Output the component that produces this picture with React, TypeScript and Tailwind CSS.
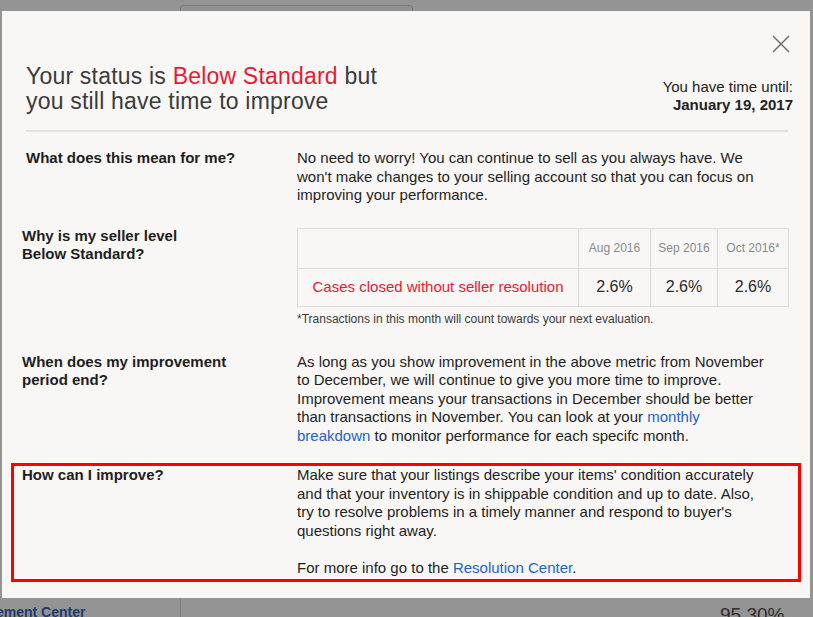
import React from "react";

const font = { fontFamily: '"Liberation Sans", Arial, sans-serif' };

function CloseIcon() {
  return (
    <svg width="18" height="18" viewBox="0 0 18 18" fill="none" stroke="#6f6f6f" strokeWidth="1.5">
      <path d="M1 1 L17 17 M17 1 L1 17" />
    </svg>
  );
}

function Row({
  label,
  children,
  highlight,
  className,
  labelClass,
}: {
  label: React.ReactNode;
  children: React.ReactNode;
  highlight?: boolean;
  className?: string;
  labelClass?: string;
}) {
  return (
    <div
      className={
        "grid grid-cols-[275px_474px] border-[3px] pl-[8px] " +
        (highlight ? "border-[#ff0000] pb-[2px] " : "border-transparent ") +
        (className ?? "")
      }
    >
      <div className={"text-[15px] font-bold leading-[18.5px] text-[#1e1e1e] " + (labelClass ?? "")}>{label}</div>
      <div className="text-[15px] leading-[18.5px] text-[#1e1e1e]">{children}</div>
    </div>
  );
}

function MetricsTable() {
  const months = ["Aug 2016", "Sep 2016", "Oct 2016*"];
  return (
    <div className="w-[491px]">
      <table className="w-[491px] table-fixed border-collapse border border-[#dcdbd9]">
        <colgroup>
          <col className="w-[281px]" />
          <col className="w-[72px]" />
          <col className="w-[67px]" />
          <col className="w-[71px]" />
        </colgroup>
        <tbody>
          <tr className="h-[40px]">
            <td className="border border-[#dcdbd9]" />
            {months.map((m) => (
              <td key={m} className="border border-[#dcdbd9] text-center text-[12px] text-[#8a8a8a]">
                {m}
              </td>
            ))}
          </tr>
          <tr className="h-[38px]">
            <td className="border border-[#dcdbd9] text-center text-[15px] text-[#e31b35]">
              Cases closed without seller resolution
            </td>
            {months.map((m) => (
              <td key={m} className="border border-[#dcdbd9] text-center text-[16px] text-[#2a2a2a]">
                2.6%
              </td>
            ))}
          </tr>
        </tbody>
      </table>
      <p className="mt-[4px] whitespace-nowrap text-[12px] leading-[16px] text-[#3a3a3a]">
        *Transactions in this month will count towards your next evaluation.
      </p>
    </div>
  );
}

export default function App() {
  return (
    <div className="relative h-[617px] w-[813px] overflow-hidden bg-[#949494]" style={font}>
      {/* page behind the overlay */}
      <div className="absolute left-[180px] top-[5px] h-[40px] w-[233px] rounded-t-[3px] border border-[#7c7c7c] bg-[#929292]" />
      <div className="absolute left-[180px] top-[590px] h-[40px] w-px bg-[#7e7e7e]" />
      <div className="absolute left-[-4px] top-[602px] text-[14px] font-bold text-[#1f3b6e]">ement Center</div>
      <div className="absolute left-[720px] top-[601px] text-[19px] text-[#2e2e2e]">95.30%</div>

      {/* dialog */}
      <div className="absolute left-[2px] top-[11px] h-[587px] w-[808px] bg-[#f8f7f5]">
        <button className="absolute right-[20px] top-[24px]" aria-label="Close">
          <CloseIcon />
        </button>

        <div className="flex items-end justify-between pl-[24px] pr-[17px] pt-[53px]">
          <h1 className="text-[23px] font-light leading-[25px] tracking-[0.2px] text-[#3b3b3b]">
            Your status is <span className="text-[#e31b35]">Below Standard</span> but
            <br />
            you still have time to improve
          </h1>
          <div className="text-right text-[15px] leading-[18px] text-[#222]">
            <div>You have time until:</div>
            <div className="font-bold">January 19, 2017</div>
          </div>
        </div>

        <div className="ml-[24px] mt-[16px] h-[2px] w-[762px] bg-[#e3e2e0]" />

        <div className="mx-[9px]">
          <Row label="What does this mean for me?" labelClass="pl-[4px]" className="mt-[14px]">
            No need to worry! You can continue to sell as you always have. We won't make changes to your
            selling account so that you can focus on improving your performance.
          </Row>

          <Row
            className="mt-[16px]"
            label={
              <>
                Why is my seller level
                <br />
                Below Standard?
              </>
            }
          >
            <div className="pt-px">
              <MetricsTable />
            </div>
          </Row>

          <Row
            className="mt-[20px]"
            label={
              <>
                When does my improvement
                <br />
                period end?
              </>
            }
          >
            As long as you show improvement in the above metric from November to December, we will continue
            to give you more time to improve. Improvement means your transactions in December should be
            better than transactions in November. You can look at your{" "}
            <a className="text-[#1d62cc]">monthly breakdown</a> to monitor performance for each specifc
            month.
          </Row>

          <Row highlight className="mt-[15px]" label="How can I improve?">
            <p>
              Make sure that your listings describe your items' condition accurately and that your inventory
              is in shippable condition and up to date. Also, try to resolve problems in a timely manner and
              respond to buyer's questions right away.
            </p>
            <p className="mt-[18.5px]">
              For more info go to the <a className="text-[#1d62cc]">Resolution Center</a>.
            </p>
          </Row>
        </div>
      </div>
    </div>
  );
}
